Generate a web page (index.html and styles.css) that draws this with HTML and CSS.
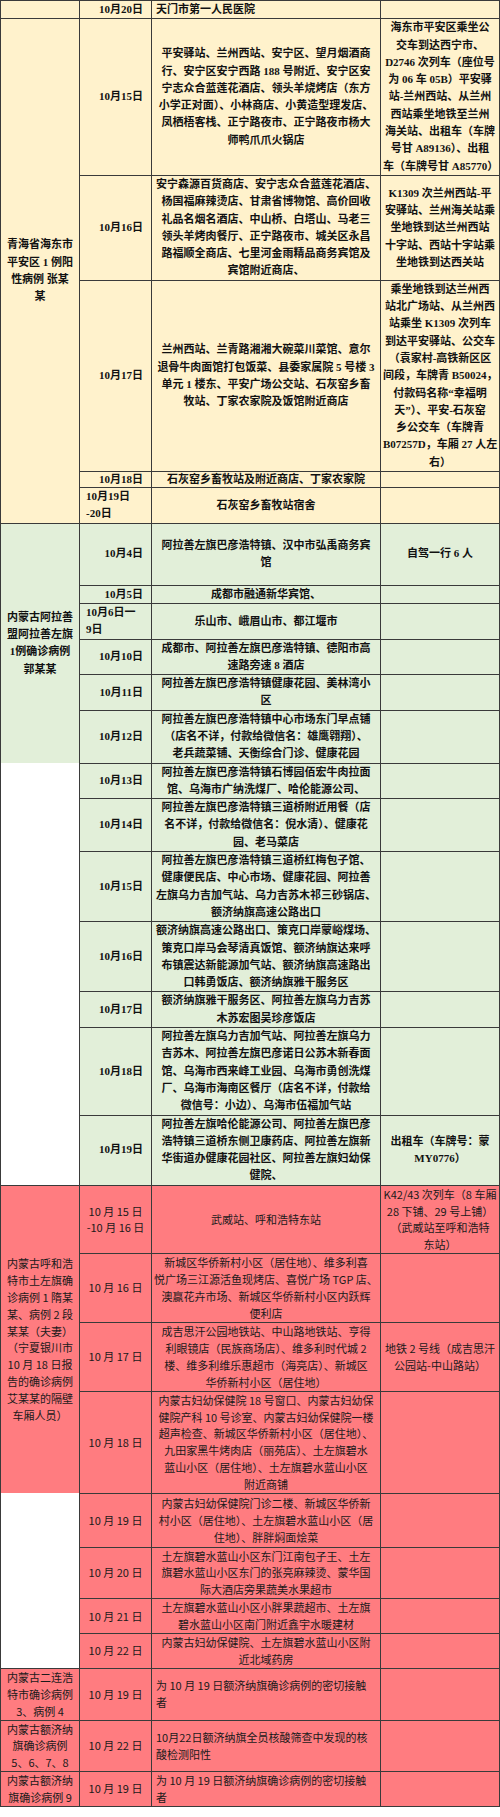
FILE: index.html
```html
<!DOCTYPE html>
<html lang="zh-CN">
<head>
<meta charset="utf-8">
<title>行程表</title>
<link rel="stylesheet" href="styles.css">
</head>
<body>
<table class="trip">
<colgroup><col class="c1"><col class="c2"><col class="c3"><col class="c4"></colgroup>
<tbody class="sec-y">
<tr><td class="who"></td><td class="d">10月20日</td><td class="p pl">天门市第一人民医院</td><td></td></tr>
<tr><td class="who" rowspan="6">青海省海东市<br>平安区 1 例阳<br>性病例 张某<br>某</td><td class="d">10月15日</td><td class="p">平安驿站、兰州西站、安宁区、望月烟酒商<br>行、安宁区安宁西路 188 号附近、安宁区安<br>宁志众合蓝莲花酒店、领头羊烧烤店（东方<br>小学正对面）、小林商店、小黄造型理发店、<br>凤栖梧客栈、正宁路夜市、正宁路夜市杨大<br>师鸭爪爪火锅店</td><td class="t">海东市平安区乘坐公<br>交车到达西宁市、<br>D2746 次列车（座位号<br>为 06 车 05B）平安驿<br>站-兰州西站、从兰州<br>西站乘坐地铁至兰州<br>海关站、出租车（车牌<br>号甘 A89136）、出租<br>车（车牌号甘 A85770）</td></tr>
<tr><td class="d">10月16日</td><td class="p">安宁森源百货商店、安宁志众合蓝莲花酒店、<br>杨国福麻辣烫店、甘肃省博物馆、高价回收<br>礼品名烟名酒店、中山桥、白塔山、马老三<br>领头羊烤肉餐厅、正宁路夜市、城关区永昌<br>路福顺全商店、七里河金雨精品商务宾馆及<br>宾馆附近商店、</td><td class="t">K1309 次兰州西站-平<br>安驿站、兰州海关站乘<br>坐地铁到达兰州西站<br>十字站、西站十字站乘<br>坐地铁到达西关站</td></tr>
<tr><td class="d">10月17日</td><td class="p">兰州西站、兰青路湘湘大碗菜川菜馆、意尔<br>退骨牛肉面馆打包饭菜、县委家属院 5 号楼 3<br>单元 1 楼东、平安广场公交站、石灰窑乡畜<br>牧站、丁家农家院及饭馆附近商店</td><td class="t">乘坐地铁到达兰州西<br>站北广场站、从兰州西<br>站乘坐 K1309 次列车<br>到达平安驿站、公交车<br>（袁家村-高铁新区区<br>间段，车牌青 B50024，<br>付款码名称“幸福明<br>天”）、平安-石灰窑<br>乡公交车（车牌青<br>B07257D，车厢 27 人左<br>右）</td></tr>
<tr class="short"><td class="d">10月18日</td><td class="p">石灰窑乡畜牧站及附近商店、丁家农家院</td><td></td></tr>
<tr><td class="d dl">10月19日<br>-20日</td><td class="p">石灰窑乡畜牧站宿舍</td><td></td></tr>
</tbody>
<tbody class="sec-g">
<tr class="tall"><td class="who top" rowspan="6">内蒙古阿拉善<br>盟阿拉善左旗<br>1例确诊病例<br>郭某某</td><td class="d">10月4日</td><td class="p">阿拉善左旗巴彦浩特镇、汉中市弘禹商务宾<br>馆</td><td class="t">自驾一行 6 人</td></tr>
<tr><td class="d">10月5日</td><td class="p">成都市融通新华宾馆、</td><td></td></tr>
<tr><td class="d dl">10月6日一<br>9日</td><td class="p">乐山市、峨眉山市、都江堰市</td><td></td></tr>
<tr><td class="d">10月10日</td><td class="p">成都市、阿拉善左旗巴彦浩特镇、德阳市高<br>速路旁速 8 酒店</td><td></td></tr>
<tr><td class="d">10月11日</td><td class="p">阿拉善左旗巴彦浩特镇健康花园、美林湾小<br>区</td><td></td></tr>
<tr><td class="d">10月12日</td><td class="p">阿拉善左旗巴彦浩特镇中心市场东门早点铺<br>（店名不详，付款给微信名：雄鹰翱翔）、<br>老兵蔬菜铺、天衡综合门诊、健康花园</td><td></td></tr>
<tr><td class="blank" rowspan="7"></td><td class="d">10月13日</td><td class="p">阿拉善左旗巴彦浩特镇石博园佰宏牛肉拉面<br>馆、乌海市广纳洗煤厂、哈伦能源公司、</td><td></td></tr>
<tr><td class="d">10月14日</td><td class="p">阿拉善左旗巴彦浩特镇三道桥附近用餐（店<br>名不详，付款给微信名：倪水清）、健康花<br>园、老马菜店</td><td></td></tr>
<tr><td class="d">10月15日</td><td class="p">阿拉善左旗巴彦浩特镇三道桥红梅包子馆、<br>健康便民店、中心市场、健康花园、阿拉善<br>左旗乌力吉加气站、乌力吉苏木祁三砂锅店、<br>额济纳旗高速公路出口</td><td></td></tr>
<tr><td class="d">10月16日</td><td class="p">额济纳旗高速公路出口、策克口岸蒙峪煤场、<br>策克口岸马会琴清真饭馆、额济纳旗达来呼<br>布镇震达新能源加气站、额济纳旗高速路出<br>口韩勇饭店、额济纳旗雅干服务区</td><td></td></tr>
<tr><td class="d">10月17日</td><td class="p">额济纳旗雅干服务区、阿拉善左旗乌力吉苏<br>木苏宏图吴珍彦饭店</td><td></td></tr>
<tr><td class="d">10月18日</td><td class="p">阿拉善左旗乌力吉加气站、阿拉善左旗乌力<br>吉苏木、阿拉善左旗巴彦诺日公苏木新春面<br>馆、乌海市西来峰工业园、乌海市勇创洗煤<br>厂、乌海市海南区餐厅（店名不详，付款给<br>微信号：小边）、乌海市伍福加气站</td><td></td></tr>
<tr><td class="d">10月19日</td><td class="p">阿拉善左旗哈伦能源公司、阿拉善左旗巴彦<br>浩特镇三道桥东侧卫康药店、阿拉善左旗新<br>华街道办健康花园社区、阿拉善左旗妇幼保<br>健院、</td><td class="t">出租车（车牌号：蒙<br>MY0776）</td></tr>
</tbody>
<tbody class="sec-r">
<tr class="h67"><td class="who top" rowspan="4">内蒙古呼和浩<br>特市土左旗确<br>诊病例 1 隋某<br>某、病例 2 段<br>某某（夫妻）<br>（宁夏银川市<br>10 月 18 日报<br>告的确诊病例<br>艾某某的隔壁<br>车厢人员）</td><td class="d">10 月 15 日<br>-10 月 16 日</td><td class="p">武威站、呼和浩特东站</td><td class="t">K42/43 次列车（8 车厢<br>28 下铺、29 号上铺）<br>（武威站至呼和浩特<br>东站）</td></tr>
<tr class="h69"><td class="d">10 月 16 日</td><td class="p">新城区华侨新村小区（居住地）、维多利喜<br>悦广场三江源活鱼现烤店、喜悦广场 TGP 店、<br>澳赢花卉市场、新城区华侨新村小区内跃辉<br>便利店</td><td></td></tr>
<tr class="h69"><td class="d">10 月 17 日</td><td class="p">成吉思汗公园地铁站、中山路地铁站、亨得<br>利眼镜店（民族商场店）、维多利时代城 2<br>楼、维多利维乐惠超市（海亮店）、新城区<br>华侨新村小区（居住地）</td><td class="t">地铁 2 号线（成吉思汗<br>公园站-中山路站）</td></tr>
<tr class="h101"><td class="d">10 月 18 日</td><td class="p">内蒙古妇幼保健院 18 号窗口、内蒙古妇幼保<br>健院产科 10 号诊室、内蒙古妇幼保健院一楼<br>超声检查、新城区华侨新村小区（居住地）、<br>九田家黑牛烤肉店（丽苑店）、土左旗碧水<br>蓝山小区（居住地）、土左旗碧水蓝山小区<br>附近商铺</td><td></td></tr>
<tr class="h54"><td class="blank" rowspan="4"></td><td class="d">10 月 19 日</td><td class="p">内蒙古妇幼保健院门诊二楼、新城区华侨新<br>村小区（居住地）、土左旗碧水蓝山小区（居<br>住地）、胖胖焖面烩菜</td><td></td></tr>
<tr class="h50"><td class="d">10 月 20 日</td><td class="p">土左旗碧水蓝山小区东门江南包子王、土左<br>旗碧水蓝山小区东门的张亮麻辣烫、蒙华国<br>际大酒店旁果蔬美水果超市</td><td></td></tr>
<tr class="h35"><td class="d">10 月 21 日</td><td class="p">土左旗碧水蓝山小区小胖果蔬超市、土左旗<br>碧水蓝山小区南门附近鑫宇水暖建材</td><td></td></tr>
<tr class="h34"><td class="d">10 月 22 日</td><td class="p">内蒙古妇幼保健院、土左旗碧水蓝山小区附<br>近北域药房</td><td></td></tr>
<tr class="h52"><td class="who">内蒙古二连浩<br>特市确诊病例<br>3、病例 4</td><td class="d">10 月 19 日</td><td class="p pl">为 10 月 19 日额济纳旗确诊病例的密切接触<br>者</td><td></td></tr>
<tr class="h51"><td class="who">内蒙古额济纳<br>旗确诊病例<br>5、6、7、8</td><td class="d">10 月 22 日</td><td class="p pl">10月22日额济纳旗全员核酸筛查中发现的核<br>酸检测阳性</td><td></td></tr>
<tr class="h34"><td class="who">内蒙古额济纳<br>旗确诊病例 9</td><td class="d">10 月 19 日</td><td class="p pl">为 10 月 19 日额济纳旗确诊病例的密切接触<br>者</td><td></td></tr>
</tbody>
</table>
</body>
</html>
```

FILE: styles.css
```css
html, body {
  margin: 0;
  padding: 0;
  background: #ffffff;
}

.trip {
  border-collapse: collapse;
  table-layout: fixed;
  width: 499px;
  font-size: 11px;
  line-height: 17.3px;
  color: #111;
}

.c1 { width: 79px; }
.c2 { width: 72px; }
.c3 { width: 229px; }
.c4 { width: 119px; }

.trip td {
  border: 1px solid #3a3a3a;
  padding: 0 2px;
  vertical-align: middle;
  text-align: center;
  white-space: nowrap;
  overflow: hidden;
}

.sec-y td,
.sec-g td {
  font-family: "Liberation Serif", "Noto Sans CJK SC", serif;
  font-weight: 700;
}

.sec-y td { background: #fff2cc; }
.sec-g td { background: #e2efd9; }

.sec-r td {
  background: #ff7c80;
  font-family: "Noto Sans CJK SC", sans-serif;
  font-weight: 400;
  line-height: 16.8px;
  color: #1a1a1a;
}

.trip td.blank {
  background: #ffffff;
  border-top-style: hidden;
}

.trip td.top {
  border-bottom-style: hidden;
}

.sec-y td.d,
.sec-g td.d {
  text-align: right;
  padding-right: 8px;
}

.sec-y td.dl,
.sec-g td.dl {
  text-align: left;
  padding-left: 6px;
  padding-right: 0;
}

.sec-r td.d {
  text-align: center;
}

.trip td.pl {
  text-align: left;
  padding-left: 4px;
}

.tall { height: 62px; }

.short td { line-height: 15px; }

.h34 { height: 34px; }
.h35 { height: 35px; }
.h50 { height: 50px; }
.h51 { height: 51px; }
.h52 { height: 52px; }
.h54 { height: 54px; }
.h67 { height: 67px; }
.h69 { height: 69px; }
.h101 { height: 101px; }
```
